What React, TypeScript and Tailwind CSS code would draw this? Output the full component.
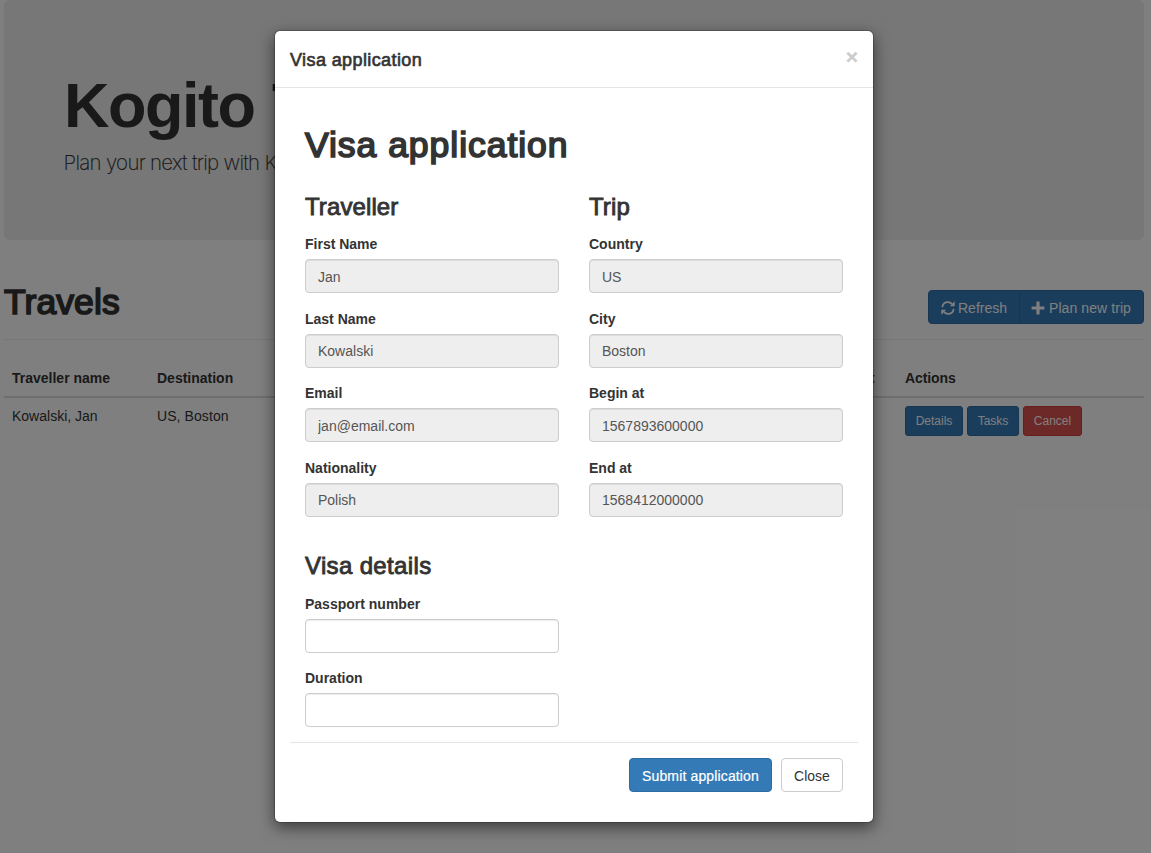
import type { ReactNode } from "react";
import clsx from "clsx";

function RefreshIcon() {
  return (
    <svg viewBox="0 0 14 14" className="h-3.5 w-3.5" fill="none" stroke="currentColor" strokeWidth="1.7">
      <path d="M1.3 6.2C1.7 3.3 4 1.2 6.9 1.2c1.7 0 3.2.7 4.2 1.9" />
      <path d="M12.7 7.8c-.4 2.9-2.7 5-5.6 5-1.7 0-3.2-.7-4.2-1.9" />
      <path d="M13.7.3v4.9H8.8zM.3 13.7V8.8h4.9z" fill="currentColor" stroke="none" />
    </svg>
  );
}

function PlusIcon() {
  return (
    <svg viewBox="0 0 14 14" className="h-3.5 w-3.5" fill="currentColor">
      <path d="M5.4.6h3.2v4.8h4.8v3.2H8.6v4.8H5.4V8.6H.6V5.4h4.8z" />
    </svg>
  );
}

function Button({ children, className }: { children: ReactNode; className: string }) {
  return (
    <button type="button" className={clsx("flex items-center border", className)}>
      {children}
    </button>
  );
}

function Field({ label, value }: { label: string; value?: string }) {
  return (
    <div className="h-[74.6px]">
      <label className="mb-[5px] block text-sm/5 font-bold">{label}</label>
      <input
        readOnly={value !== undefined}
        defaultValue={value}
        className={clsx(
          "block h-[34px] w-full rounded border border-[#ccc] px-3 pt-[1.3px] text-sm/5 text-[#555] shadow-[inset_0_1px_1px_rgba(0,0,0,0.075)]",
          value !== undefined ? "bg-[#eee]" : "bg-white",
        )}
      />
    </div>
  );
}

/* Medium weight drawn as the regular face with a thin outline. */
const medium = "font-normal [-webkit-text-stroke:0.036em_currentColor]";
const mediumLarge = "font-normal [-webkit-text-stroke:0.048em_currentColor]";

function Page() {
  return (
    <main className="ml-1 w-[1140px]">
      <header className="h-60 rounded-md bg-[#eee] px-[60px] pt-[70px]">
        <h1 className="text-[63px]/[70px] font-bold tracking-[-1.5px] whitespace-nowrap [word-spacing:1.5px]">Kogito Travel Agency</h1>
        <p className="-ml-[0.5px] mt-2 font-[Inter] text-[20.5px]/[30px] font-extralight tracking-[-0.72px] [-webkit-text-stroke:0.15px_currentColor]">
          Plan your next trip with Kogito
        </p>
      </header>
      <div className="flex h-[100px] items-start justify-between border-b border-[#eee] pt-[41px]">
        <h2 className={clsx(mediumLarge, "mt-px text-[35.5px]/[40px] tracking-[0.1px]")}>Travels</h2>
        <div className="mt-[9px] flex text-sm text-white">
          <Button className="h-[34px] w-[92px] gap-[3px] rounded-l border-[#2e6da4] bg-[#337ab7] pl-3 pt-0.5">
            <RefreshIcon /> Refresh
          </Button>
          <Button className="-ml-px h-[34px] w-[125px] gap-1 rounded-r border-[#2e6da4] bg-[#337ab7] pl-[11px] pt-0.5">
            <PlusIcon /> <span className="whitespace-nowrap tracking-[0.08px]">Plan new trip</span>
          </Button>
        </div>
      </div>
      <table className="mt-[19px] w-full table-fixed text-left text-sm/5">
        <colgroup>
          <col className="w-[145px]" />
          <col className="w-[145px]" />
          <col />
          <col className="w-[247px]" />
        </colgroup>
        <thead>
          <tr className="h-[38px] border-b-2 border-[#ddd]">
            <th className="px-2">Traveller name</th>
            <th className="px-2">Destination</th>
            <th className="pr-[22.5px] text-right">Flight</th>
            <th className="px-2 tracking-[-0.1px]">Actions</th>
          </tr>
        </thead>
        <tbody>
          <tr className="align-top">
            <td className="px-2 pt-2">Kowalski, Jan</td>
            <td className="px-2 pt-2 tracking-[0.08px]">US, Boston</td>
            <td />
            <td className="px-2 pt-2">
              <div className="flex gap-1 text-xs text-white">
                <Button className="h-[30px] w-[58px] justify-center rounded-[3px] border-[#2e6da4] bg-[#337ab7]">Details</Button>
                <Button className="h-[30px] w-[52px] justify-center rounded-[3px] border-[#2e6da4] bg-[#337ab7]">Tasks</Button>
                <Button className="h-[30px] w-[59px] justify-center rounded-[3px] border-[#d43f3a] bg-[#d9534f]">Cancel</Button>
              </div>
            </td>
          </tr>
        </tbody>
      </table>
    </main>
  );
}

function VisaDialog() {
  return (
    <div
      role="dialog"
      className="absolute left-[274px] top-[30px] h-[793px] w-[600px] rounded-md border border-black/20 bg-white bg-clip-padding shadow-[0_5px_15px_rgba(0,0,0,0.5)]"
    >
      <div className="flex h-[57px] items-start justify-between border-b border-[#e5e5e5] px-[15px] pt-[17px]">
        <h4 className={clsx(medium, "text-lg/6 tracking-[0.4px]")}>Visa application</h4>
        <button type="button" className="-mt-px text-[21px]/5 font-bold text-[#ccc] [-webkit-text-stroke:0.3px_currentColor]">×</button>
      </div>
      <div className="px-[15px]">
        <div className="h-[654px] px-[15px] pt-[37px]">
          <h1 className={clsx(mediumLarge, "text-[35.5px]/[40px] tracking-[0.97px]")}>Visa application</h1>
          <div className="mt-7 grid grid-cols-2 gap-x-[30px]">
            <section>
              <h3 className={clsx(medium, "mb-3.5 text-2xl/[27px] tracking-[0.1px]")}>Traveller</h3>
              <Field label="First Name" value="Jan" />
              <Field label="Last Name" value="Kowalski" />
              <Field label="Email" value="jan@email.com" />
              <Field label="Nationality" value="Polish" />
            </section>
            <section>
              <h3 className={clsx(medium, "mb-3.5 text-2xl/[27px] tracking-[0.1px]")}>Trip</h3>
              <Field label="Country" value="US" />
              <Field label="City" value="Boston" />
              <Field label="Begin at" value="1567893600000" />
              <Field label="End at" value="1568412000000" />
            </section>
            <section className="mt-[19.6px]">
              <h3 className={clsx(medium, "mb-[14.6px] text-2xl/[27px] tracking-[0.35px]")}>Visa details</h3>
              <Field label="Passport number" />
              <Field label="Duration" />
            </section>
          </div>
        </div>
        <footer className="flex justify-end gap-[9px] border-t border-[#e5e5e5] p-[15px] text-sm">
          <Button className="h-[34px] w-[143px] justify-center rounded border-[#2e6da4] bg-[#337ab7] pt-0.5 tracking-[0.14px] text-white [-webkit-text-stroke:0.2px_currentColor]">
            Submit application
          </Button>
          <Button className="h-[34px] w-[62px] justify-center rounded border-[#ccc] bg-white pt-0.5 text-[#333]">Close</Button>
        </footer>
      </div>
    </div>
  );
}

export default function App() {
  return (
    <div className="relative h-[853px] w-[1151px] overflow-hidden bg-white font-['Liberation_Sans',sans-serif] text-[#333]">
      <Page />
      <div className="absolute inset-0 bg-black/50" />
      <VisaDialog />
    </div>
  );
}
